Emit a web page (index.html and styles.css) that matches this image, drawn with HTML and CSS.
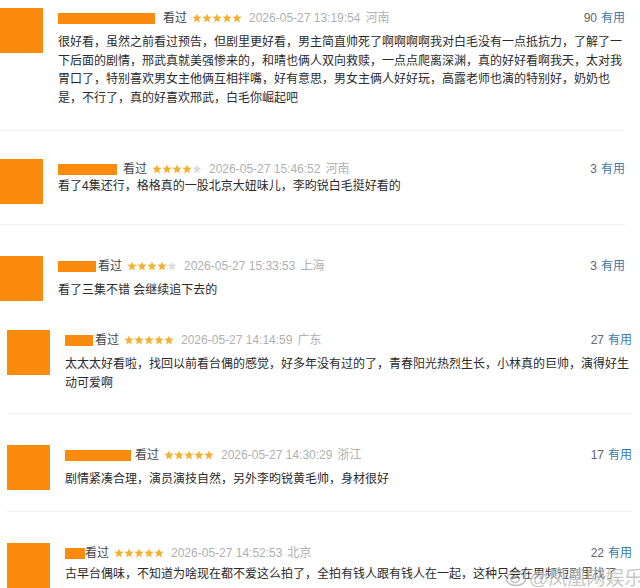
FILE: index.html
```html
<!DOCTYPE html>
<html lang="zh-CN">
<head>
    <meta charset="UTF-8">
    <meta name="viewport" content="width=device-width, initial-scale=1.0">
    <title>短评</title>
    <link rel="stylesheet" href="styles.css">
</head>
<body>
    <svg width="0" height="0" class="defs">
        <symbol id="star" viewBox="0 0 10 10">
            <polygon points="5,0.4 6.2,3.6 9.7,3.7 7,5.9 7.9,9.4 5,7.4 2.1,9.4 3,5.9 0.3,3.7 3.8,3.6" />
        </symbol>
    </svg>
    <div class="page">
      <!-- first screenshot -->
      <div class="sheet sheet-a">
        <div class="comment c1">
          <div class="avatar"></div>
          <div class="comment-body">
            <div class="comment-info">
              <span class="name-mask mask-97"></span>
              <span class="watched gap-8">看过</span>
              <span class="stars">
                <svg><use href="#star"/></svg><svg><use href="#star"/></svg><svg><use href="#star"/></svg><svg><use href="#star"/></svg><svg><use href="#star"/></svg>
              </span>
              <span class="time">2026-05-27 13:19:54</span>
              <span class="ip">河南</span>
              <span class="votes"><span class="vote-count">90</span><a class="useful">有用</a></span>
            </div>
            <p class="comment-text">很好看，虽然之前看过预告，但剧里更好看，男主简直帅死了啊啊啊啊我对白毛没有一点抵抗力，了解了一下后面的剧情，邢武真就美强惨来的，和晴也俩人双向救赎，一点点爬离深渊，真的好好看啊我天，太对我胃口了，特别喜欢男女主他俩互相拌嘴，好有意思，男女主俩人好好玩，高露老师也演的特别好，奶奶也是，不行了，真的好喜欢邢武，白毛你崛起吧</p>
          </div>
        </div>

        <div class="comment c2">
          <div class="avatar"></div>
          <div class="comment-body">
            <div class="comment-info">
              <span class="name-mask mask-59"></span>
              <span class="watched gap-6">看过</span>
              <span class="stars">
                <svg><use href="#star"/></svg><svg><use href="#star"/></svg><svg><use href="#star"/></svg><svg><use href="#star"/></svg><svg class="off"><use href="#star"/></svg>
              </span>
              <span class="time">2026-05-27 15:46:52</span>
              <span class="ip">河南</span>
              <span class="votes"><span class="vote-count">3</span><a class="useful">有用</a></span>
            </div>
            <p class="comment-text">看了4集还行，格格真的一股北京大妞味儿，李昀锐白毛挺好看的</p>
          </div>
        </div>

        <div class="comment c3">
          <div class="avatar"></div>
          <div class="comment-body">
            <div class="comment-info">
              <span class="name-mask mask-38"></span>
              <span class="watched gap-2">看过</span>
              <span class="stars">
                <svg><use href="#star"/></svg><svg><use href="#star"/></svg><svg><use href="#star"/></svg><svg><use href="#star"/></svg><svg class="off"><use href="#star"/></svg>
              </span>
              <span class="time">2026-05-27 15:33:53</span>
              <span class="ip">上海</span>
              <span class="votes"><span class="vote-count">3</span><a class="useful">有用</a></span>
            </div>
            <p class="comment-text">看了三集不错 会继续追下去的</p>
          </div>
        </div>
      </div>

      <!-- second screenshot -->
      <div class="sheet sheet-b">
        <div class="comment c4">
          <div class="avatar"></div>
          <div class="comment-body">
            <div class="comment-info">
              <span class="name-mask mask-28"></span>
              <span class="watched gap-2">看过</span>
              <span class="stars">
                <svg><use href="#star"/></svg><svg><use href="#star"/></svg><svg><use href="#star"/></svg><svg><use href="#star"/></svg><svg><use href="#star"/></svg>
              </span>
              <span class="time">2026-05-27 14:14:59</span>
              <span class="ip">广东</span>
              <span class="votes"><span class="vote-count">27</span><a class="useful">有用</a></span>
            </div>
            <p class="comment-text">太太太好看啦，找回以前看台偶的感觉，好多年没有过的了，青春阳光热烈生长，小林真的巨帅，演得好生动可爱啊</p>
          </div>
        </div>

        <div class="comment c5">
          <div class="avatar"></div>
          <div class="comment-body">
            <div class="comment-info">
              <span class="name-mask mask-66"></span>
              <span class="watched gap-4">看过</span>
              <span class="stars">
                <svg><use href="#star"/></svg><svg><use href="#star"/></svg><svg><use href="#star"/></svg><svg><use href="#star"/></svg><svg><use href="#star"/></svg>
              </span>
              <span class="time">2026-05-27 14:30:29</span>
              <span class="ip">浙江</span>
              <span class="votes"><span class="vote-count">17</span><a class="useful">有用</a></span>
            </div>
            <p class="comment-text">剧情紧凑合理，演员演技自然，另外李昀锐黄毛帅，身材很好</p>
          </div>
        </div>

        <div class="comment c6">
          <div class="avatar"></div>
          <div class="comment-body">
            <div class="comment-info">
              <span class="name-mask mask-20"></span>
              <span class="watched">看过</span>
              <span class="stars">
                <svg><use href="#star"/></svg><svg><use href="#star"/></svg><svg><use href="#star"/></svg><svg><use href="#star"/></svg><svg><use href="#star"/></svg>
              </span>
              <span class="time">2026-05-27 14:52:53</span>
              <span class="ip">北京</span>
              <span class="votes"><span class="vote-count">22</span><a class="useful">有用</a></span>
            </div>
            <p class="comment-text">古早台偶味，不知道为啥现在都不爱这么拍了，全拍有钱人跟有钱人在一起，这种只会在男频短剧里找了</p>
          </div>
        </div>
      </div>

      <!-- watermark -->
      <div class="watermark">
        <svg class="wb-logo" viewBox="0 0 24 20">
          <ellipse cx="11" cy="12" rx="9.5" ry="6.5" />
          <ellipse cx="10" cy="12.5" rx="4" ry="3" />
          <path d="M16 3.5 a5 5 0 0 1 5 5" />
        </svg>
        <span>@凤凰网娱乐</span>
      </div>
    </div>
</body>
</html>
```

FILE: styles.css
```css
body {
  margin: 0;
  background: #fff;
  font-family: "Liberation Sans", "Noto Sans CJK SC", sans-serif;
  font-size: 12px;
  color: #333;
}

.defs {
  position: absolute;
}

.page {
  position: relative;
  width: 640px;
  height: 588px;
  overflow: hidden;
}

.sheet-a {
  width: 625px;
}

.sheet-b {
  padding-left: 7px;
  width: 625px;
}

.comment {
  display: flex;
  align-items: flex-start;
  border-bottom: 1px solid #f0f0f0;
}

.avatar {
  flex: none;
  width: 43px;
  height: 45px;
  margin-right: 15px;
  background: #fa8b0c;
}

.comment-body {
  flex: 1;
  min-width: 0;
}

.comment-info {
  display: flex;
  align-items: center;
  height: 20px;
  line-height: 20px;
  white-space: nowrap;
  color: #444;
}

.name-mask {
  height: 11px;
  background: #fa8b0c;
}

.mask-97 { width: 97px; }
.mask-59 { width: 59px; }
.mask-38 { width: 38px; }
.mask-28 { width: 28px; }
.mask-66 { width: 66px; }
.mask-20 { width: 20px; }

.gap-8 { margin-left: 8px; }
.gap-6 { margin-left: 6px; }
.gap-4 { margin-left: 4px; }
.gap-2 { margin-left: 2px; }

.stars {
  display: inline-flex;
  margin-left: 5px;
}

.stars svg {
  width: 10px;
  height: 10px;
  fill: #f3b12f;
}

.stars svg.off {
  fill: #dcdcdc;
}

.time {
  margin-left: 7px;
  color: #b0b0b0;
}

.ip {
  margin-left: 5px;
  color: #b0b0b0;
}

.votes {
  margin-left: auto;
  color: #666;
}

.useful {
  margin-left: 4px;
  color: #3a78a8;
}

.comment-text {
  margin: 5px 0 0;
  line-height: 18.5px;
  color: #2b2b2b;
}

/* spacing of each cut-out */
.c1 { padding: 8px 0 23px; }
.c2 { padding: 28px 0 20px; }
.c2 .comment-text { margin-top: -2px; }
.c3 { padding: 31px 0 14px; border-bottom-color: transparent; }
.c4 { padding: 14px 0 21px; }
.c5 { padding: 31px 0 21px; }
.c6 { padding: 31px 0 0; border-bottom: none; }
.c6 .comment-text { margin-top: 2px; }

.watermark {
  position: absolute;
  left: 505px;
  top: 563px;
  display: flex;
  align-items: center;
  color: rgba(150, 150, 150, 0.55);
  font-size: 19px;
  white-space: nowrap;
  text-shadow: 0 0 2px #fff;
}

.wb-logo {
  width: 24px;
  height: 20px;
  fill: none;
  stroke: rgba(150, 150, 150, 0.6);
  stroke-width: 1.5;
}
```
